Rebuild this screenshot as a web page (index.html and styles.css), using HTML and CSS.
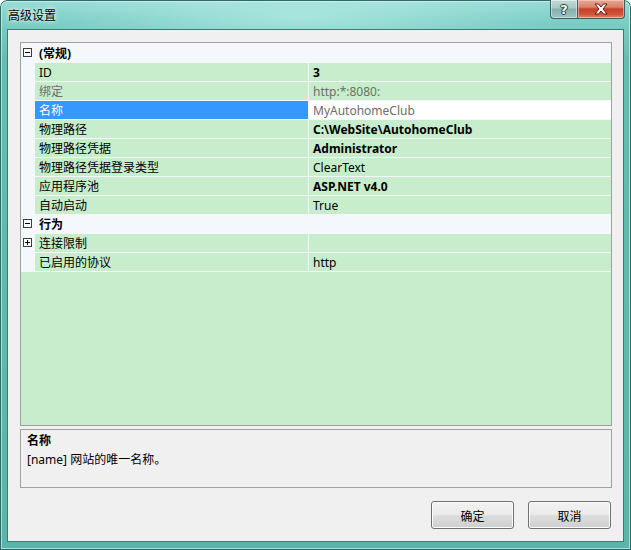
FILE: index.html
```html
<!DOCTYPE html>
<html lang="zh-CN">
<head>
<meta charset="utf-8">
<title>高级设置</title>
<link rel="stylesheet" href="styles.css">
</head>
<body>
<div class="window">
  <div class="titlebar">
    <span class="title">高级设置</span>
    <div class="caption-buttons">
      <div class="cap-btn help"><span class="help-glyph">?</span></div>
      <div class="cap-btn close">
        <svg width="16" height="12" viewBox="0 0 16 12">
          <path d="M2 1 L5.5 1 L8 4 L10.5 1 L14 1 L10 6 L14 11 L10.5 11 L8 8 L5.5 11 L2 11 L6 6 Z" fill="#ffffff" stroke="#5a1a10" stroke-width="1" stroke-linejoin="round"/>
        </svg>
      </div>
    </div>
  </div>
  <div class="client">
    <div class="grid">
      <div class="topline"></div>
      <div class="row category">
        <div class="gutter"><span class="expander minus"></span></div>
        <div class="cat-label">(常规)</div>
      </div>
      <div class="row"><div class="gutter"></div><div class="name">ID</div><div class="value bold">3</div></div>
      <div class="row"><div class="gutter"></div><div class="name grey">绑定</div><div class="value grey">http:*:8080:</div></div>
      <div class="row selected"><div class="gutter"></div><div class="name">名称</div><div class="value grey">MyAutohomeClub</div></div>
      <div class="row"><div class="gutter"></div><div class="name">物理路径</div><div class="value bold">C:\WebSite\AutohomeClub</div></div>
      <div class="row"><div class="gutter"></div><div class="name">物理路径凭据</div><div class="value bold">Administrator</div></div>
      <div class="row"><div class="gutter"></div><div class="name">物理路径凭据登录类型</div><div class="value">ClearText</div></div>
      <div class="row"><div class="gutter"></div><div class="name">应用程序池</div><div class="value bold">ASP.NET v4.0</div></div>
      <div class="row"><div class="gutter"></div><div class="name">自动启动</div><div class="value">True</div></div>
      <div class="row category">
        <div class="gutter"><span class="expander minus"></span></div>
        <div class="cat-label">行为</div>
      </div>
      <div class="row"><div class="gutter"><span class="expander plus"></span></div><div class="name">连接限制</div><div class="value"></div></div>
      <div class="row"><div class="gutter"></div><div class="name">已启用的协议</div><div class="value">http</div></div>
      <div class="filler"></div>
    </div>
    <div class="desc">
      <div class="desc-title">名称</div>
      <div class="desc-text">[name] 网站的唯一名称。</div>
    </div>
    <div class="buttons">
      <button class="btn">确定</button>
      <button class="btn">取消</button>
    </div>
  </div>
</div>
</body>
</html>
```

FILE: styles.css
```css
* { box-sizing: border-box; }
html, body { margin: 0; padding: 0; }
body {
  width: 631px;
  height: 550px;
  overflow: hidden;
  background: #ffffff;
  font-family: "Noto Sans", "Noto Sans CJK SC", sans-serif;
  font-size: 12px;
  color: #000;
}
.window {
  width: 631px;
  height: 550px;
  display: flex;
  flex-direction: column;
  padding: 0 7px 8px 7px;
  border-radius: 7px 7px 0 0;
  background:
    radial-gradient(ellipse 260px 40px at 300px 18px, rgba(200,245,240,0.55), rgba(200,245,240,0) 100%),
    linear-gradient(180deg, #9ddcd6 0px, #7ccfc7 20px, #62bdb3 60px, #59b5aa 100%);
  box-shadow: inset 0 0 0 1px #2f6b66, inset 0 0 0 2px rgba(220,250,248,0.6);
}
.titlebar {
  height: 29px;
  display: flex;
  align-items: flex-start;
  padding-left: 1px;
  margin-right: -1px;
}
.title {
  margin-top: 6px;
  line-height: 18px;
  font-family: "Noto Sans CJK SC", sans-serif;
  font-size: 12px;
  color: #000;
  text-shadow: 0 0 6px rgba(255,255,255,0.9), 0 0 3px rgba(255,255,255,0.9);
}
.caption-buttons {
  margin-left: auto;
  display: flex;
  height: 19px;
}
.cap-btn {
  height: 19px;
  display: flex;
  align-items: center;
  justify-content: center;
  border: 1px solid #3b5f5c;
  border-top: none;
}
.help {
  width: 27px;
  border-right: none;
  border-radius: 0 0 0 4px;
  background: linear-gradient(180deg, #c3dcda 0%, #a7c8c5 45%, #86aeab 50%, #9cc5c1 100%);
  box-shadow: inset 0 0 0 1px rgba(255,255,255,0.45);
}
.help-glyph {
  font-family: "DejaVu Sans", sans-serif;
  font-weight: bold;
  font-size: 13px;
  line-height: 13px;
  color: #fff;
  text-shadow: 0 0 1px #24403d, 1px 0 0 #24403d, -1px 0 0 #24403d, 0 1px 0 #24403d, 0 -1px 0 #24403d;
}
.close {
  width: 48px;
  border-radius: 0 0 4px 0;
  background: linear-gradient(180deg, #e8a898 0%, #d98069 40%, #c6402a 50%, #d25338 80%, #e08a6d 100%);
  box-shadow: inset 0 0 0 1px rgba(255,220,210,0.5);
}
.client {
  flex: 1;
  display: flex;
  flex-direction: column;
  background: #f0f0f0;
  border: 1px solid #3e7a74;
  padding: 12px 11px 12px 12px;
}
.grid {
  height: 384px;
  border: 1px solid #a0a0a0;
  display: flex;
  flex-direction: column;
  background: #c7edcc;
}
.topline { height: 1px; background: #f4f7fc; }
.row {
  height: 19px;
  display: flex;
  border-bottom: 1px solid #f4f7fc;
  line-height: 20px;
  font-family: "Noto Sans", "Noto Sans CJK SC", sans-serif;
}
.gutter {
  width: 14px;
  flex: none;
  background: #f4f7fc;
  position: relative;
}
.name {
  width: 274px;
  flex: none;
  background: #c7edcc;
  border-right: 1px solid #f4f7fc;
  padding-left: 4px;
  white-space: nowrap;
  overflow: hidden;
}
.value {
  flex: 1;
  background: #c7edcc;
  padding-left: 4px;
  white-space: nowrap;
  overflow: hidden;
}
.bold { font-weight: bold; }
.grey { color: #6d6d6d; }
.selected .name { background: #3399ff; color: #fff; }
.selected .value { background: #ffffff; }
.category { background: #f4f7fc; }
.cat-label {
  padding-left: 4px;
  font-weight: bold;
  overflow: hidden;
}
.expander {
  position: absolute;
  left: 2px;
  top: 4px;
  width: 9px;
  height: 9px;
  border: 1px solid #3c3c3c;
  background: #ffffff;
}
.expander::before {
  content: "";
  position: absolute;
  left: 1px;
  top: 3px;
  width: 5px;
  height: 1px;
  background: #000;
}
.expander.plus::after {
  content: "";
  position: absolute;
  left: 3px;
  top: 1px;
  width: 1px;
  height: 5px;
  background: #000;
}
.filler { flex: 1; background: #c7edcc; }
.desc {
  margin-top: 3px;
  height: 59px;
  border: 1px solid #a0a0a0;
  background: #f0f0f0;
  padding: 1px 6px;
  line-height: 19px;
}
.desc-title { font-weight: bold; }
.buttons {
  margin-top: 13px;
  display: flex;
  justify-content: flex-end;
  gap: 14px;
  padding-right: 1px;
}
.btn {
  width: 83px;
  height: 28px;
  border: 1px solid #707070;
  border-radius: 3px;
  background: linear-gradient(180deg, #f2f2f2 0%, #ebebeb 48%, #dddddd 52%, #cfcfcf 100%);
  box-shadow: inset 0 0 0 1px #fcfcfc;
  font-family: "Noto Sans CJK SC", sans-serif;
  font-size: 12px;
  color: #000;
  padding: 0;
}
```
